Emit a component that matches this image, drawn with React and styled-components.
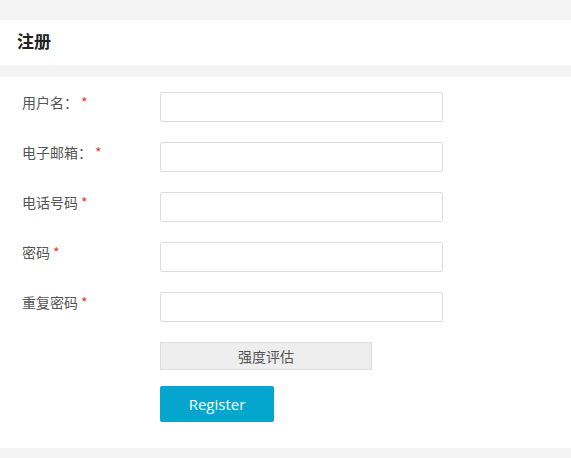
import React from "react";
import styled, { createGlobalStyle } from "styled-components";

const GlobalStyle = createGlobalStyle`
  html, body {
    margin: 0;
    padding: 0;
    background: #f4f4f4;
    font-family: "Noto Sans", "Noto Sans CJK SC", sans-serif;
  }
`;

const Page = styled.div`
  padding: 20px 0 11px;
  display: flex;
  flex-direction: column;
  gap: 12px;
`;

const Header = styled.div`
  background: #fff;
  height: 45px;
  display: flex;
  align-items: center;
  padding-left: 17px;
  h1 {
    margin: 0 0 5px;
    font-size: 17px;
    font-weight: bold;
    color: #222;
    font-family: "Noto Sans CJK SC", sans-serif;
  }
`;

const Panel = styled.form`
  background: #fff;
  padding: 15px 0 26px 22px;
  display: flex;
  flex-direction: column;
`;

const Row = styled.div`
  display: flex;
  align-items: flex-start;
  margin-bottom: 20px;
`;

const Label = styled.label`
  width: 138px;
  font-size: 14px;
  line-height: 20px;
  color: #555;
  font-family: "Noto Sans CJK SC", sans-serif;
  span {
    color: #e4393c;
    margin-left: 3px;
  }
`;

const Input = styled.input`
  box-sizing: border-box;
  width: 283px;
  height: 30px;
  border: 1px solid #ddd;
  border-radius: 2px;
  outline: none;
  padding: 0 8px;
  font-size: 14px;
`;

const Strength = styled.div`
  margin-left: 138px;
  box-sizing: border-box;
  width: 212px;
  height: 28px;
  background: #eee;
  border: 1px solid #ddd;
  display: flex;
  align-items: center;
  justify-content: center;
  font-size: 14px;
  color: #555;
  font-family: "Noto Sans CJK SC", sans-serif;
`;

const Button = styled.button`
  margin: 16px 0 0 138px;
  width: 114px;
  height: 36px;
  background: #05a6cd;
  color: #fff;
  border: none;
  border-radius: 2px;
  font-size: 15px;
  font-family: "Open Sans", "Noto Sans", sans-serif;
  cursor: pointer;
  align-self: flex-start;
`;

const fields = [
  { label: "用户名：", type: "text" },
  { label: "电子邮箱：", type: "email" },
  { label: "电话号码", type: "tel" },
  { label: "密码", type: "password" },
  { label: "重复密码", type: "password" },
];

export default function App() {
  return (
    <>
      <GlobalStyle />
      <Page>
        <Header>
          <h1>注册</h1>
        </Header>
        <Panel onSubmit={(e) => e.preventDefault()}>
          {fields.map((f) => (
            <Row key={f.label}>
              <Label>
                {f.label}
                <span>*</span>
              </Label>
              <Input type={f.type} />
            </Row>
          ))}
          <Strength>强度评估</Strength>
          <Button type="submit">Register</Button>
        </Panel>
      </Page>
    </>
  );
}
